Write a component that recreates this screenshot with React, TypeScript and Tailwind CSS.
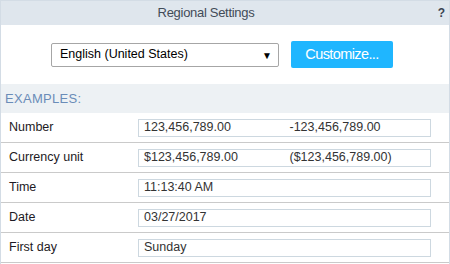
import { useState } from 'react';

const rows: { label: string; values: string[] }[] = [
  { label: 'Number', values: ['123,456,789.00', '-123,456,789.00'] },
  { label: 'Currency unit', values: ['$123,456,789.00', '($123,456,789.00)'] },
  { label: 'Time', values: ['11:13:40 AM'] },
  { label: 'Date', values: ['03/27/2017'] },
  { label: 'First day', values: ['Sunday'] },
];

export default function App() {
  const [locale, setLocale] = useState('en-US');

  return (
    <div className="w-[450px] h-[264px] bg-white border-x border-[#d3dce5] font-['Liberation_Sans',Arial,sans-serif] text-[13px]">
      <div className="h-[25px] bg-[#dfe6ed] flex items-center border-t border-[#d3dce5]">
        <div className="flex-1 text-center text-[#424b58] pr-[2px] text-[13px] tracking-[-0.3px]">Regional Settings</div>
        <div className="w-[36px] text-right pr-[4px] font-bold text-[#3a4452] text-[12px]">?</div>
      </div>

      <div className="h-[59px] flex items-center pl-[50px] gap-[12px]">
        <div className="relative w-[228px] h-[24px]">
          <select
            value={locale}
            onChange={(e) => setLocale(e.target.value)}
            className="appearance-none w-full h-full border border-[#a6a6a6] rounded-[2px] bg-white pl-[8px] text-[12.5px] text-black outline-none"
          >
            <option value="en-US">English (United States)</option>
          </select>
          <span className="pointer-events-none absolute right-[7px] top-[5px] text-[10px] text-black">▼</span>
        </div>
        <button className="w-[102px] h-[27px] rounded-[2px] bg-[#1fb6ff] text-white text-[14.5px] tracking-[-0.6px]">
          Customize...
        </button>
      </div>

      <div className="h-[29px] bg-[#edf1f4] flex items-center pl-[4px] text-[13px] text-[#6a8cb8] tracking-[0.3px]">
        EXAMPLES:
      </div>

      <div>
        {rows.map((r) => (
          <div key={r.label} className="h-[30px] flex items-center border-b border-[#cacaca]">
            <div className="w-[137px] pl-[8px] text-[#1d1a24] text-[12.5px]">{r.label}</div>
            <div className="w-[293px] h-[18px] border border-[#cdd8e0] grid grid-cols-2 items-center text-[12.5px] text-[#333333]">
              {r.values.map((v) => (
                <span key={v} className="pl-[5px] leading-none">{v}</span>
              ))}
            </div>
          </div>
        ))}
      </div>
    </div>
  );
}
